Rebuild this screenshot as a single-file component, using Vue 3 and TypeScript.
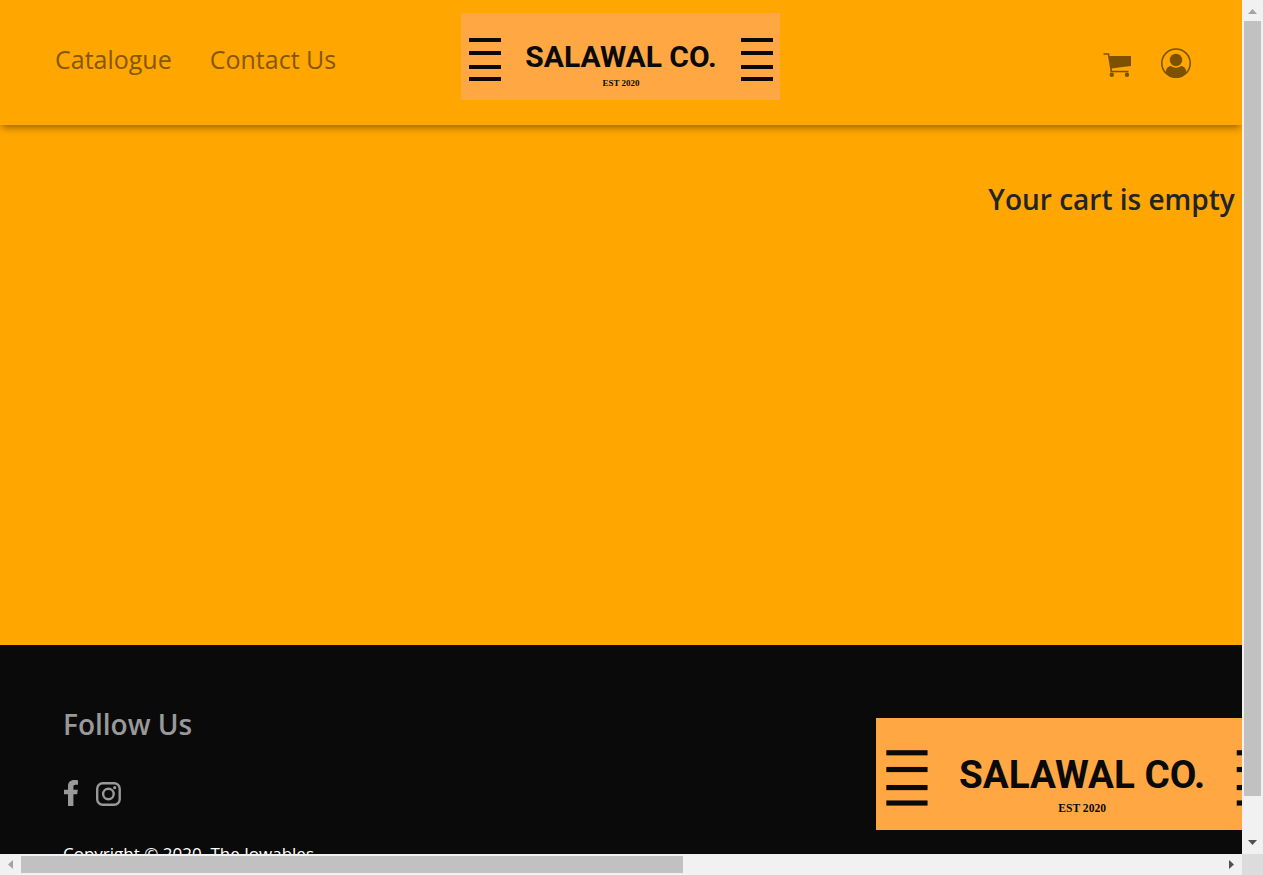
<script setup lang="ts">
const bars: number[] = [25, 38, 52, 64]
const links: string[] = ['Catalogue', 'Contact Us']
</script>

<template>
  <div class="window">
    <div class="view">
      <header class="bar">
        <nav class="links">
          <a v-for="link in links" :key="link" href="#">{{ link }}</a>
        </nav>
        <a class="brand" href="#" aria-label="Salawal Co. home">
          <svg class="logo" viewBox="0 0 319 87">
            <rect class="plate" width="319" height="87" />
            <g v-for="y in bars" :key="y">
              <rect x="8" :y="y" width="32" height="4" />
              <rect x="280" :y="y" width="32" height="4" />
            </g>
            <text class="name" x="160" y="54">SALAWAL CO.</text>
            <text class="est" x="160" y="73">EST 2020</text>
          </svg>
        </a>
        <div class="actions">
          <a href="#" aria-label="Cart">
            <svg width="30" height="30" viewBox="0 0 30 30">
              <path d="M0.500 6h5l3 18" fill="none" stroke="#7c5200" stroke-width="1.600" />
              <path d="M6 8H28V18L8 20.500z" />
              <path d="M7.500 22.800h18v1.500h-18z" />
              <circle cx="8.800" cy="26.800" r="2.200" />
              <circle cx="24" cy="26.800" r="2.200" />
            </svg>
          </a>
          <a href="#" aria-label="Account">
            <svg width="30" height="30" viewBox="0 0 30 30">
              <circle cx="15" cy="15.200" r="14.200" fill="none" stroke="#7c5200" stroke-width="1.600" />
              <circle cx="15" cy="12" r="6.200" />
              <path d="M4.500 24.500C5 20.500 7 18.300 10 18c3 2.300 7 2.300 10 0c3 .3 5 2.500 5.500 6.500C20 31 10 31 4.500 24.500z" />
            </svg>
          </a>
        </div>
      </header>

      <main class="cart">
        <h1>Your cart is empty</h1>
      </main>

      <footer class="foot">
        <section class="follow">
          <h2>Follow Us</h2>
          <div class="social">
            <a href="#" aria-label="Facebook">
              <svg width="16" height="28" viewBox="0 0 16 28">
                <path d="M15 .2v4.600h-2.300c-2 0-2.300.9-2.300 2.300v2.600h4.400l-.6 4.600h-3.800V26H5V14.300H1V9.700h4V6.200C5 2.200 7.500 0 11.200 0c1.700 0 3.300.1 3.800.2z" />
              </svg>
            </a>
            <a href="#" aria-label="Instagram">
              <svg width="26" height="28" viewBox="0 0 26 28">
                <rect x="2.200" y="3.200" width="22.500" height="21.500" rx="5.500" fill="none" stroke="#999" stroke-width="2.400" />
                <circle cx="13.400" cy="14" r="5.300" fill="none" stroke="#999" stroke-width="2.400" />
                <circle cx="19.700" cy="7.700" r="1.600" />
              </svg>
            </a>
          </div>
          <p>Copyright © 2020, The Jowables</p>
        </section>
        <svg class="logo big" viewBox="0 0 319 87" role="img" aria-label="Salawal Co.">
          <rect class="plate" width="319" height="87" />
          <g v-for="y in bars" :key="y">
            <rect x="8" :y="y" width="32" height="4" />
            <rect x="280" :y="y" width="32" height="4" />
          </g>
          <text class="name" x="160" y="54">SALAWAL CO.</text>
          <text class="est" x="160" y="73">EST 2020</text>
        </svg>
      </footer>
    </div>

    <div class="track vertical">
      <button type="button" aria-label="Scroll up" class="off">
        <svg width="21" height="21" viewBox="0 0 21 21"><path d="M6 14h9l-4.500-5z" /></svg>
      </button>
      <div class="rail"><div class="thumb"></div></div>
      <button type="button" aria-label="Scroll down">
        <svg width="21" height="21" viewBox="0 0 21 21"><path d="M6 7h9l-4.500 5z" /></svg>
      </button>
    </div>
    <div class="track horizontal">
      <button type="button" aria-label="Scroll left" class="off">
        <svg width="21" height="21" viewBox="0 0 21 21"><path d="M13 6v9l-5-4.500z" /></svg>
      </button>
      <div class="rail"><div class="thumb"></div></div>
      <button type="button" aria-label="Scroll right">
        <svg width="21" height="21" viewBox="0 0 21 21"><path d="M8 6v9l5-4.500z" /></svg>
      </button>
    </div>
    <div class="corner"></div>
  </div>
</template>

<style>
body {
  background: #ffa600;
}
</style>

<style scoped>
.window {
  display: grid;
  grid-template: minmax(0, 1fr) 21px / minmax(0, 1fr) 21px;
  height: 100vh;
  font-family: "Open Sans", "Noto Sans", sans-serif;
}
.view {
  display: flex;
  flex-direction: column;
  overflow: hidden;
  background: #ffa600;
}
a {
  color: inherit;
  text-decoration: none;
}
svg {
  display: block;
  flex: none;
}
.bar {
  display: grid;
  grid-template-columns: 1fr auto 1fr;
  flex: none;
  box-sizing: border-box;
  height: 125px;
  padding: 13px 51px 0 50px;
  color: #855700;
  box-shadow: 0 4px 8px -2px rgba(0, 0, 0, 0.45);
}
.links {
  display: flex;
  gap: 38px;
  padding: 30px 0 0 5px;
  font-size: 25px;
  font-weight: 500;
  line-height: 32px;
}
.logo {
  width: 319px;
  fill: #0a0a0a;
}
.plate {
  fill: #ffa843;
}
.name {
  font: 700 30px Roboto, "Open Sans", sans-serif;
  text-anchor: middle;
}
.est {
  font: 700 9px "Liberation Serif", serif;
  text-anchor: middle;
}
.actions {
  display: flex;
  justify-content: flex-end;
  gap: 28px;
  padding-top: 35px;
  fill: #7c5200;
}
.cart {
  flex: none;
  width: 179%;
  height: 520px;
  box-sizing: border-box;
  padding-top: 54px;
  text-align: center;
}
h1,
h2,
p {
  margin: 0;
}
h1 {
  color: #212529;
  font-size: 28px;
  font-weight: 600;
  line-height: 40px;
}
.foot {
  display: flex;
  justify-content: space-between;
  flex: none;
  height: 250px;
  padding-left: 63px;
  background: #0a0a0a;
  color: #999;
}
.follow {
  flex: none;
  padding-top: 59px;
}
h2 {
  font-size: 28px;
  font-weight: 600;
  line-height: 40px;
}
.social {
  display: flex;
  gap: 16px;
  margin: 36px 0 33px;
  fill: #999;
}
p {
  color: #fff;
  font-size: 17px;
  line-height: 26px;
}
.big {
  width: 411px;
  margin: 73px -45px 0 0;
  align-self: flex-start;
}
.track {
  display: flex;
  background: #f1f1f1;
}
.vertical {
  flex-direction: column;
}
.track button {
  width: 21px;
  height: 21px;
  padding: 0;
  border: 0;
  background: none;
  fill: #505050;
}
.track button.off {
  fill: #a3a3a3;
}
.rail {
  flex: 1;
}
.thumb {
  background: #c1c1c1;
}
.vertical .thumb {
  height: 95.5%;
  margin: 0 2px;
}
.horizontal .rail {
  padding: 2px 0;
}
.horizontal .thumb {
  width: 55.2%;
  height: 17px;
}
.corner {
  background: #dcdcdc;
}
</style>
